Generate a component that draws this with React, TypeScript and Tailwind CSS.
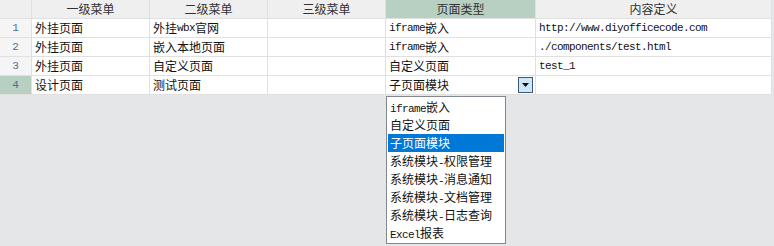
import React from "react";

const columns = ["一级菜单", "二级菜单", "三级菜单", "页面类型", "内容定义"];

const rows = [
  ["外挂页面", "外挂wbx官网", "", "iframe嵌入", "http://www.diyofficecode.com"],
  ["外挂页面", "嵌入本地页面", "", "iframe嵌入", "./components/test.html"],
  ["外挂页面", "自定义页面", "", "自定义页面", "test_1"],
  ["设计页面", "测试页面", "", "子页面模块", ""],
];

const options = [
  "iframe嵌入",
  "自定义页面",
  "子页面模块",
  "系统模块-权限管理",
  "系统模块-消息通知",
  "系统模块-文档管理",
  "系统模块-日志查询",
  "Excel报表",
];

// latin runs get narrower monospace, like the half-width glyphs of a CJK bitmap font
function Mixed({ text }: { text: string }) {
  const parts = text.match(/[\x20-\x7e]+|[^\x20-\x7e]+/g) ?? [];
  return (
    <>
      {parts.map((p, i) =>
        /^[\x20-\x7e]+$/.test(p) ? (
          <span key={i} className="font-['Liberation_Mono',monospace] text-[11px] tracking-[-0.6px]">
            {p}
          </span>
        ) : (
          <span key={i}>{p}</span>
        )
      )}
    </>
  );
}

export default function App() {
  return (
    <div className="relative w-[774px] h-[246px] bg-[#e5e6e8] font-['Noto_Sans_CJK_SC','Noto_Sans',sans-serif] text-[12px] leading-[18px] text-[#111]">
      <div className="grid w-fit grid-cols-[31px_117px_117px_117px_149px_235px] grid-rows-[18px_18px_18px_18px_18px] gap-px bg-[#e0e0e0] pr-px pb-px">
        {/* header */}
        <div className="bg-[#efefef]" />
        {columns.map((c, i) => (
          <div
            key={c}
            className={`flex items-center justify-center text-[#333] ${i === 3 ? "bg-[#b7d0c1]" : "bg-[#efefef]"}`}
          >
            {c}
          </div>
        ))}

        {rows.map((r, ri) => (
          <React.Fragment key={ri}>
            <div
              className={`flex items-center justify-center font-['Liberation_Mono',monospace] text-[11px] text-[#4d6f95] ${ri === 3 ? "bg-[#b7d0c1]" : "bg-[#f5f5f5]"}`}
            >
              {ri + 1}
            </div>
            {r.map((cell, ci) => (
              <div key={ci} className="relative flex items-center bg-white pl-[3px] whitespace-nowrap overflow-hidden">
                <Mixed text={cell} />
                {ri === 3 && ci === 3 && (
                  <div className="absolute right-[2px] top-[1px] flex h-[16px] w-[15px] items-center justify-center border border-[#3a5a78] bg-[#cfe5f9]">
                    <svg width="7" height="4" viewBox="0 0 7 4">
                      <path d="M0 0h7L3.5 4z" fill="#111" />
                    </svg>
                  </div>
                )}
              </div>
            ))}
          </React.Fragment>
        ))}
      </div>

      {/* open dropdown list */}
      <div className="absolute left-[386px] top-[96px] w-[120px] border border-[#828790] bg-white p-px">
        {options.map((o) => (
          <div
            key={o}
            className={`h-[18px] pl-[2px] leading-[18px] whitespace-nowrap ${o === "子页面模块" ? "bg-[#0078d7] text-white" : ""}`}
          >
            <Mixed text={o} />
          </div>
        ))}
      </div>
    </div>
  );
}
